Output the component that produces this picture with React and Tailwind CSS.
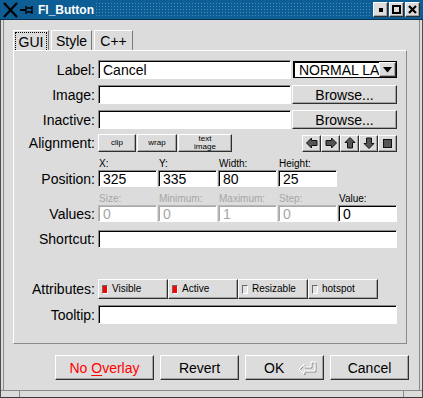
import React from 'react';

const UP = 'bg-[#dcdcdc] border border-t-white border-l-white border-r-[#2f2f2f] border-b-[#2f2f2f] shadow-[inset_-1px_-1px_0_#a3a3a3]';
const DOWN = 'bg-white border border-t-[#8c8c8c] border-l-[#8c8c8c] border-r-white border-b-white shadow-[inset_1px_1px_0_#000]';
const DOWN_OFF = 'bg-white border border-t-[#b8b8b8] border-l-[#b8b8b8] border-r-white border-b-white shadow-[inset_1px_1px_0_#a8a8a8]';

function Field({ children, className = '', off }) {
    return (
        <div className={`${off ? DOWN_OFF : DOWN} flex items-center pl-[4px] text-[14px] leading-none ${off ? 'text-[#a6a6a6]' : 'text-black'} ${className}`}>
            {children}
        </div>
    );
}

function Label({ children, className = '' }) {
    return <div className={`w-[81px] text-right text-[14px] leading-none shrink-0 ${className}`}>{children}</div>;
}

function Arrow({ rot }) {
    return (
        <svg width="12" height="12" viewBox="0 0 12 12" style={{ transform: `rotate(${rot}deg)` }}>
            <polygon points="0.5,6 5.5,1 5.5,3.5 11,3.5 11,8.5 5.5,8.5 5.5,11" fill="#555" stroke="#111" strokeWidth="1" />
        </svg>
    );
}

function Light({ on, label }) {
    return (
        <div className={`${UP} w-[70px] h-[20px] flex items-center pl-[3px] text-[10px] leading-none`}>
            <div className={`w-[6px] h-[9px] border border-t-[#6a6a6a] border-l-[#6a6a6a] border-r-white border-b-white ${on ? 'bg-[#ff0000]' : 'bg-[#e4e4e4]'}`} />
            <span className="ml-[4px]">{label}</span>
        </div>
    );
}

function SmallCol({ label, value, off }) {
    return (
        <div className="w-[60px] flex flex-col">
            <div className={`h-[12px] text-[10px] leading-[12px] pl-[1px] ${off ? 'text-[#a6a6a6]' : 'text-black'}`}>{label}</div>
            <Field off={off} className="w-[59px] h-[17px]">{value}</Field>
        </div>
    );
}

function TitleBar() {
    return (
        <div className="h-[20px] flex bg-[#0d5e94] border-b border-[#08324f] shrink-0">
            <div className="flex items-center pl-[3px] w-[95px]">
                <svg width="32" height="16" viewBox="0 0 32 16">
                    <path d="M1 1 L14 15 M14 1 L1 15" stroke="#000" strokeWidth="2.2" />
                    <path d="M17 8 H23" stroke="#000" strokeWidth="2" />
                    <path d="M23 4 V12 M24 6 H29 V10 H24 M29 4 V12" stroke="#000" strokeWidth="1.5" fill="none" />
                </svg>
                <span className="ml-[3px] text-white font-bold text-[12px] leading-none">Fl_Button</span>
            </div>
            <div className="flex-1 my-[2px]">
                <svg width="100%" height="100%">
                    <defs>
                        <pattern id="dots" width="3" height="3" patternUnits="userSpaceOnUse">
                            <rect x="1" y="1" width="1" height="1" fill="#4a8cc2" />
                        </pattern>
                    </defs>
                    <rect width="100%" height="100%" fill="url(#dots)" />
                </svg>
            </div>
            <div className="flex items-center gap-[1px] pl-[3px] pr-[3px]">
                <div className={`${UP} w-[15px] h-[15px] flex items-center justify-center`}>
                    <div className="w-[4px] h-[4px] bg-black" />
                </div>
                <div className={`${UP} w-[15px] h-[15px] flex items-center justify-center`}>
                    <div className="w-[9px] h-[9px] border-2 border-black" />
                </div>
                <div className={`${UP} w-[15px] h-[15px] flex items-center justify-center`}>
                    <svg width="9" height="9" viewBox="0 0 9 9">
                        <path d="M1 1 L8 8 M8 1 L1 8" stroke="#000" strokeWidth="2.2" />
                    </svg>
                </div>
            </div>
        </div>
    );
}

export default function App() {
    return (
        <div className="w-[423px] h-[398px] bg-[#dcdcdc] flex flex-col overflow-hidden font-['Liberation_Sans',Arial,sans-serif] text-black">
            <TitleBar />
            <div className="flex-1 flex flex-col border-x border-[#4d4d4d]">
                <div className="flex-1 mx-[2px] border-x border-[#8a8a8a] flex flex-col pl-[9px] pt-[10px]">
                    {/* Tabs */}
                    <div className="flex h-[20px] gap-[2px]">
                        <div className="w-[36px] border-t border-l border-r border-t-white border-l-white border-r-[#7a7a7a] p-[1px] pb-0">
                            <div className="h-full border border-dotted border-black border-b-0 flex items-center justify-center text-[14px] leading-none">GUI</div>
                        </div>
                        <div className="w-[41px] border-t border-l border-r border-t-white border-l-white border-r-[#7a7a7a] flex items-center justify-center text-[14px] leading-none">Style</div>
                        <div className="w-[39px] border-t border-l border-r border-t-white border-l-white border-r-[#7a7a7a] flex items-center justify-center text-[14px] leading-none">C++</div>
                    </div>

                    {/* Panel */}
                    <div className="w-[394px] h-[294px] border border-t-white border-l-white border-r-[#8a8a8a] border-b-[#8a8a8a] flex flex-col pr-[9px]">
                        <div className="mt-[9px] flex items-center h-[19px]">
                            <Label>Label:</Label>
                            <Field className="ml-[3px] w-[193px] h-[19px]">Cancel</Field>
                            <div className="ml-[2px] w-[104px] h-[17px] bg-white border border-black shadow-[inset_1px_1px_0_#000] flex items-center overflow-hidden">
                                <span className="pl-[5px] text-[14px] leading-none whitespace-nowrap flex-1 overflow-hidden">NORMAL LA</span>
                                <div className={`${UP} w-[17px] h-[15px] shrink-0 flex items-center justify-center`}>
                                    <svg width="9" height="6" viewBox="0 0 9 6"><polygon points="0,0 9,0 4.5,5.5" fill="#000" /></svg>
                                </div>
                            </div>
                        </div>

                        <div className="mt-[6px] flex items-center h-[19px]">
                            <Label>Image:</Label>
                            <Field className="ml-[3px] w-[193px] h-[19px]" />
                            <div className={`${UP} ml-[1px] w-[105px] h-[19px] flex items-center justify-center text-[14px] leading-none`}>Browse...</div>
                        </div>

                        <div className="mt-[6px] flex items-center h-[19px]">
                            <Label>Inactive:</Label>
                            <Field className="ml-[3px] w-[193px] h-[19px]" />
                            <div className={`${UP} ml-[1px] w-[105px] h-[19px] flex items-center justify-center text-[14px] leading-none`}>Browse...</div>
                        </div>

                        <div className="mt-[5px] flex items-center h-[18px]">
                            <Label>Alignment:</Label>
                            <div className="ml-[3px] flex gap-[1px]">
                                <div className={`${UP} w-[38px] h-[18px] flex items-center justify-center text-[8px] leading-none`}>clip</div>
                                <div className={`${UP} w-[40px] h-[18px] flex items-center justify-center text-[8px] leading-none`}>wrap</div>
                                <div className={`${UP} w-[54px] h-[18px] flex flex-col items-center justify-center text-[8px] leading-[8px]`}>
                                    <span>text</span><span>image</span>
                                </div>
                            </div>
                            <div className="ml-auto flex">
                                {[0, 180, 90, 270].map(r => (
                                    <div key={r} className={`${UP} w-[19px] h-[17px] flex items-center justify-center`}>
                                        <Arrow rot={r} />
                                    </div>
                                ))}
                                <div className={`${UP} w-[19px] h-[17px] flex items-center justify-center`}>
                                    <div className="w-[9px] h-[9px] bg-[#555] border border-[#111]" />
                                </div>
                            </div>
                        </div>

                        <div className="mt-[6px] flex items-end">
                            <Label className="h-[17px] flex items-center justify-end">Position:</Label>
                            <div className="ml-[3px] flex">
                                <SmallCol label="X:" value="325" />
                                <SmallCol label="Y:" value="335" />
                                <SmallCol label="Width:" value="80" />
                                <SmallCol label="Height:" value="25" />
                            </div>
                        </div>

                        <div className="mt-[6px] flex items-end">
                            <Label className="h-[17px] flex items-center justify-end">Values:</Label>
                            <div className="ml-[3px] flex">
                                <SmallCol label="Size:" value="0" off />
                                <SmallCol label="Minimum:" value="0" off />
                                <SmallCol label="Maximum:" value="1" off />
                                <SmallCol label="Step:" value="0" off />
                                <SmallCol label="Value:" value="0" />
                            </div>
                        </div>

                        <div className="mt-[8px] flex items-center h-[18px]">
                            <Label>Shortcut:</Label>
                            <Field className="ml-[3px] w-[299px] h-[18px]" />
                        </div>

                        <div className="mt-[31px] flex items-center h-[20px]">
                            <Label>Attributes:</Label>
                            <div className="ml-[3px] flex">
                                <Light on label="Visible" />
                                <Light on label="Active" />
                                <Light label="Resizable" />
                                <Light label="hotspot" />
                            </div>
                        </div>

                        <div className="mt-[6px] flex items-center h-[19px]">
                            <Label>Tooltip:</Label>
                            <Field className="ml-[3px] w-[299px] h-[19px]" />
                        </div>
                    </div>

                    {/* Buttons */}
                    <div className="mt-[11px] h-[25px] flex justify-end gap-[6px] pr-[10px]">
                        <div className={`${UP} w-[99px] flex items-center justify-center text-[14px] leading-none text-[#ff0000]`}>
                            No&nbsp;<span className="underline underline-offset-2">O</span>verlay
                        </div>
                        <div className={`${UP} w-[79px] flex items-center justify-center text-[14px] leading-none`}>Revert</div>
                        <div className={`${UP} w-[79px] flex items-center pl-[18px] text-[14px] leading-none`}>
                            <span>OK</span>
                            <svg className="ml-[14px]" width="19" height="14" viewBox="0 0 19 14">
                                <polygon points="2,9 7,4 7,7 14,7 14,2 18,2 18,11 7,11 7,14" fill="none" stroke="#8a8a8a" strokeWidth="1" />
                                <polygon points="1,8 6,3 6,6 13,6 13,1 17,1 17,10 6,10 6,13" fill="none" stroke="#fff" strokeWidth="1" />
                            </svg>
                        </div>
                        <div className={`${UP} w-[79px] flex items-center justify-center text-[14px] leading-none`}>Cancel</div>
                    </div>
                    <div className="flex-1" />
                </div>
                {/* bottom frame */}
                <div className="h-[8px] flex border-t border-b border-t-[#8a8a8a] border-b-[#3a3a3a] shrink-0">
                    <div className="w-[19px] border-r border-[#8a8a8a]" />
                    <div className="flex-1" />
                    <div className="w-[19px] border-l border-[#8a8a8a]" />
                </div>
            </div>
        </div>
    );
}
